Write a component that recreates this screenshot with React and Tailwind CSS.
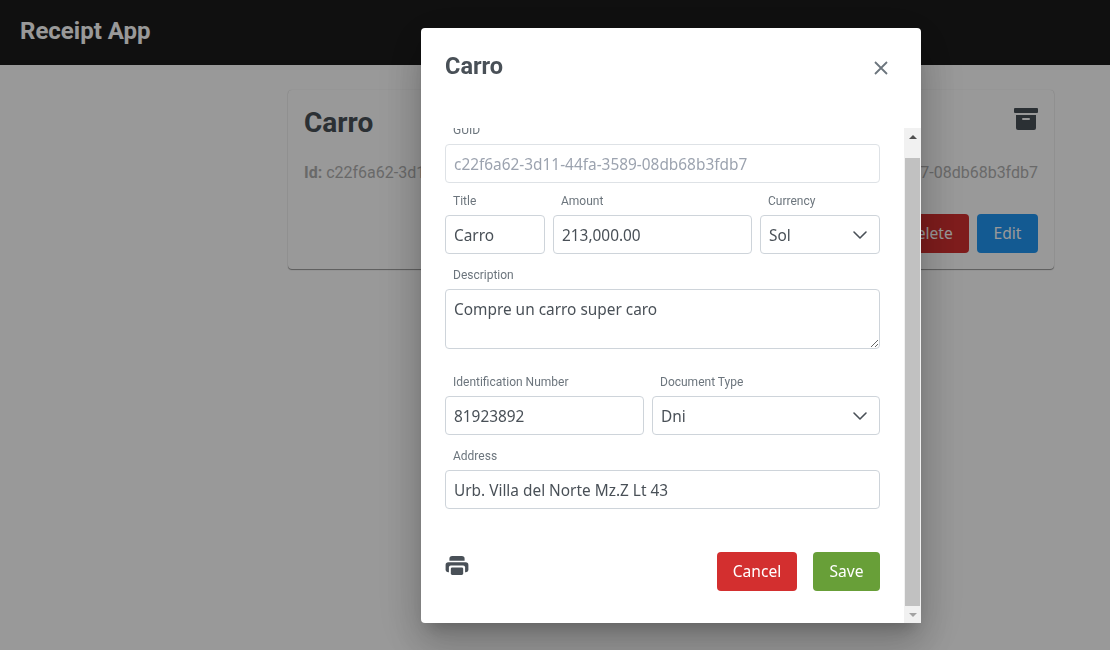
import React from "react";

const roboto = "font-['Roboto',sans-serif]";
const noto = "font-['Noto_Sans',sans-serif]";
const fieldClass = `block w-full h-[39px] rounded-[4px] border border-[#ced4da] bg-white px-2 pt-[2px] text-[15.4px] text-[#495057] outline-none ${noto}`;
const buttonClass = `h-[39px] rounded-[4px] text-[15.6px] text-white ${noto}`;

function Label({ children }) {
  return (
    <label className={`block h-4 mb-[6px] pl-2 text-xs leading-4 text-[#6c757d] ${roboto}`}>
      {children}
    </label>
  );
}

function Chevron() {
  return (
    <svg width="16" height="16" viewBox="0 0 16 16" fill="none" stroke="#495057" strokeWidth="1.6" strokeLinecap="round" strokeLinejoin="round">
      <path d="M2 5l6 6 6-6" />
    </svg>
  );
}

function SelectField({ value }) {
  return (
    <div className={`${fieldClass} flex items-center justify-between !pt-0 pr-[11px]`}>
      <span className="pt-[3px]">{value}</span>
      <Chevron />
    </div>
  );
}

function PrinterIcon() {
  return (
    <svg className="mt-[4px]" width="24" height="19" viewBox="0 0 24 20">
      <path d="M4 5V3a3 3 0 0 1 3-3h10a3 3 0 0 1 3 3v2z" fill="#495057" />
      <rect x="0" y="6.5" width="24" height="10.5" rx="3" fill="#495057" />
      <rect x="3.5" y="10" width="17" height="10" rx="2" fill="#fff" />
      <rect x="5.5" y="12" width="13" height="8" rx="1.5" fill="#495057" />
    </svg>
  );
}

function ArchiveIcon() {
  return (
    <svg className="mt-[2px]" width="24" height="22" viewBox="0 0 24 22">
      <rect x="0" y="0" width="24" height="5" rx="1" fill="#495057" />
      <path d="M2 7h20v13a2 2 0 0 1-2 2H4a2 2 0 0 1-2-2z" fill="#495057" />
      <rect x="8" y="10" width="8" height="2" rx="1" fill="#fff" />
    </svg>
  );
}

function FakeScrollbar() {
  return (
    <div className="flex w-[17px] shrink-0 flex-col items-center bg-[#f1f1f1]">
      <div className="flex h-[17px] items-center justify-center">
        <div className="h-0 w-0 border-x-[4px] border-b-[4px] border-x-transparent border-b-[#505050]" />
      </div>
      <div className="mt-[13px] h-[448px] w-[15px] bg-[#c1c1c1]" />
      <div className="mt-auto flex h-[17px] items-center justify-center">
        <div className="h-0 w-0 border-x-[4px] border-t-[4px] border-x-transparent border-t-[#a3a3a3]" />
      </div>
    </div>
  );
}

export default function App() {
  return (
    <div className={`relative h-screen overflow-hidden bg-white ${roboto}`}>
      <header className="flex h-[65px] items-center bg-[#1b1b1b] pl-5 pb-[4px]">
        <h1 className="text-2xl font-bold text-white">Receipt App</h1>
      </header>

      <main className="pl-[288px] pr-14 pt-[25px]">
        <div className="h-[179px] rounded-[4px] bg-white p-4 shadow-[0_1px_1px_rgba(0,0,0,0.4),0_0_1px_rgba(0,0,0,0.2)]">
          <div className="flex items-start justify-between">
            <h2 className="text-[28px] font-bold leading-[34px] text-[#495057]">Carro</h2>
            <ArchiveIcon />
          </div>
          <div className="mt-[21px] flex justify-between text-base text-[#b0b0b0]">
            <span>
              <b>Id:</b> c22f6a62-3d11-44fa-3589-08db68b3fdb7
            </span>
            <span>c22f6a62-3d11-44fa-3587-08db68b3fdb7</span>
          </div>
          <div className="mt-[29px] flex justify-end gap-2">
            <button className={`${buttonClass} w-[80px] bg-[#d32f2f]`}>Delete</button>
            <button className={`${buttonClass} w-[61px] bg-[#2196f3]`}>Edit</button>
          </div>
        </div>
      </main>

      <div className="fixed inset-0 flex justify-center bg-black/40 pl-[232px] pt-[28px]">
        <div className="flex h-[595px] w-[500px] flex-col rounded-[4px] bg-white shadow-[0_11px_15px_-7px_rgba(0,0,0,0.2),0_24px_38px_3px_rgba(0,0,0,0.14),0_9px_46px_8px_rgba(0,0,0,0.12)]">
          <div className="flex h-[100px] shrink-0 justify-between pl-6 pr-[32px] pt-[24px]">
            <h3 className="text-[23.5px] font-bold leading-[29px] text-[#495057]">Carro</h3>
            <svg className="mt-[8px]" width="16" height="16" viewBox="0 0 16 16" fill="none" stroke="#6c757d" strokeWidth="1.8">
              <path d="M2 2l12 12M14 2L2 14" />
            </svg>
          </div>

          <div className="flex min-h-0 flex-1">
            <div className="min-w-0 flex-1 overflow-hidden pl-6 pr-6">
              <div className="-mt-[6px]">
                <Label>GUID</Label>
                <input readOnly value="c22f6a62-3d11-44fa-3589-08db68b3fdb7" className={`${fieldClass} !text-[#9ca3af] !border-[#dee2e6]`} />

                <div className="mt-[10px] flex gap-2">
                  <div className="w-[100px]">
                    <Label>Title</Label>
                    <input readOnly value="Carro" className={fieldClass} />
                  </div>
                  <div className="flex-1">
                    <Label>Amount</Label>
                    <input readOnly value="213,000.00" className={fieldClass} />
                  </div>
                  <div className="w-[120px]">
                    <Label>Currency</Label>
                    <SelectField value="Sol" />
                  </div>
                </div>

                <div className="mt-[13px]">
                  <Label>Description</Label>
                  <textarea readOnly value="Compre un carro super caro" className={`${fieldClass} !h-[60px] !pt-[9px] leading-[22px]`} />
                </div>

                <div className="mt-[25px] flex gap-2">
                  <div className="w-[199px]">
                    <Label>Identification Number</Label>
                    <input readOnly value="81923892" className={fieldClass} />
                  </div>
                  <div className="flex-1">
                    <Label>Document Type</Label>
                    <SelectField value="Dni" />
                  </div>
                </div>

                <div className="mt-[13px]">
                  <Label>Address</Label>
                  <input readOnly value="Urb. Villa del Norte Mz.Z Lt 43" className={fieldClass} />
                </div>

                <div className="mt-[43px] flex items-start justify-between">
                  <PrinterIcon />
                  <div className="flex gap-4">
                    <button className={`${buttonClass} w-[80px] bg-[#d32f2f]`}>Cancel</button>
                    <button className={`${buttonClass} w-[67px] bg-[#689f38]`}>Save</button>
                  </div>
                </div>
              </div>
            </div>
            <FakeScrollbar />
          </div>
        </div>
      </div>
    </div>
  );
}
